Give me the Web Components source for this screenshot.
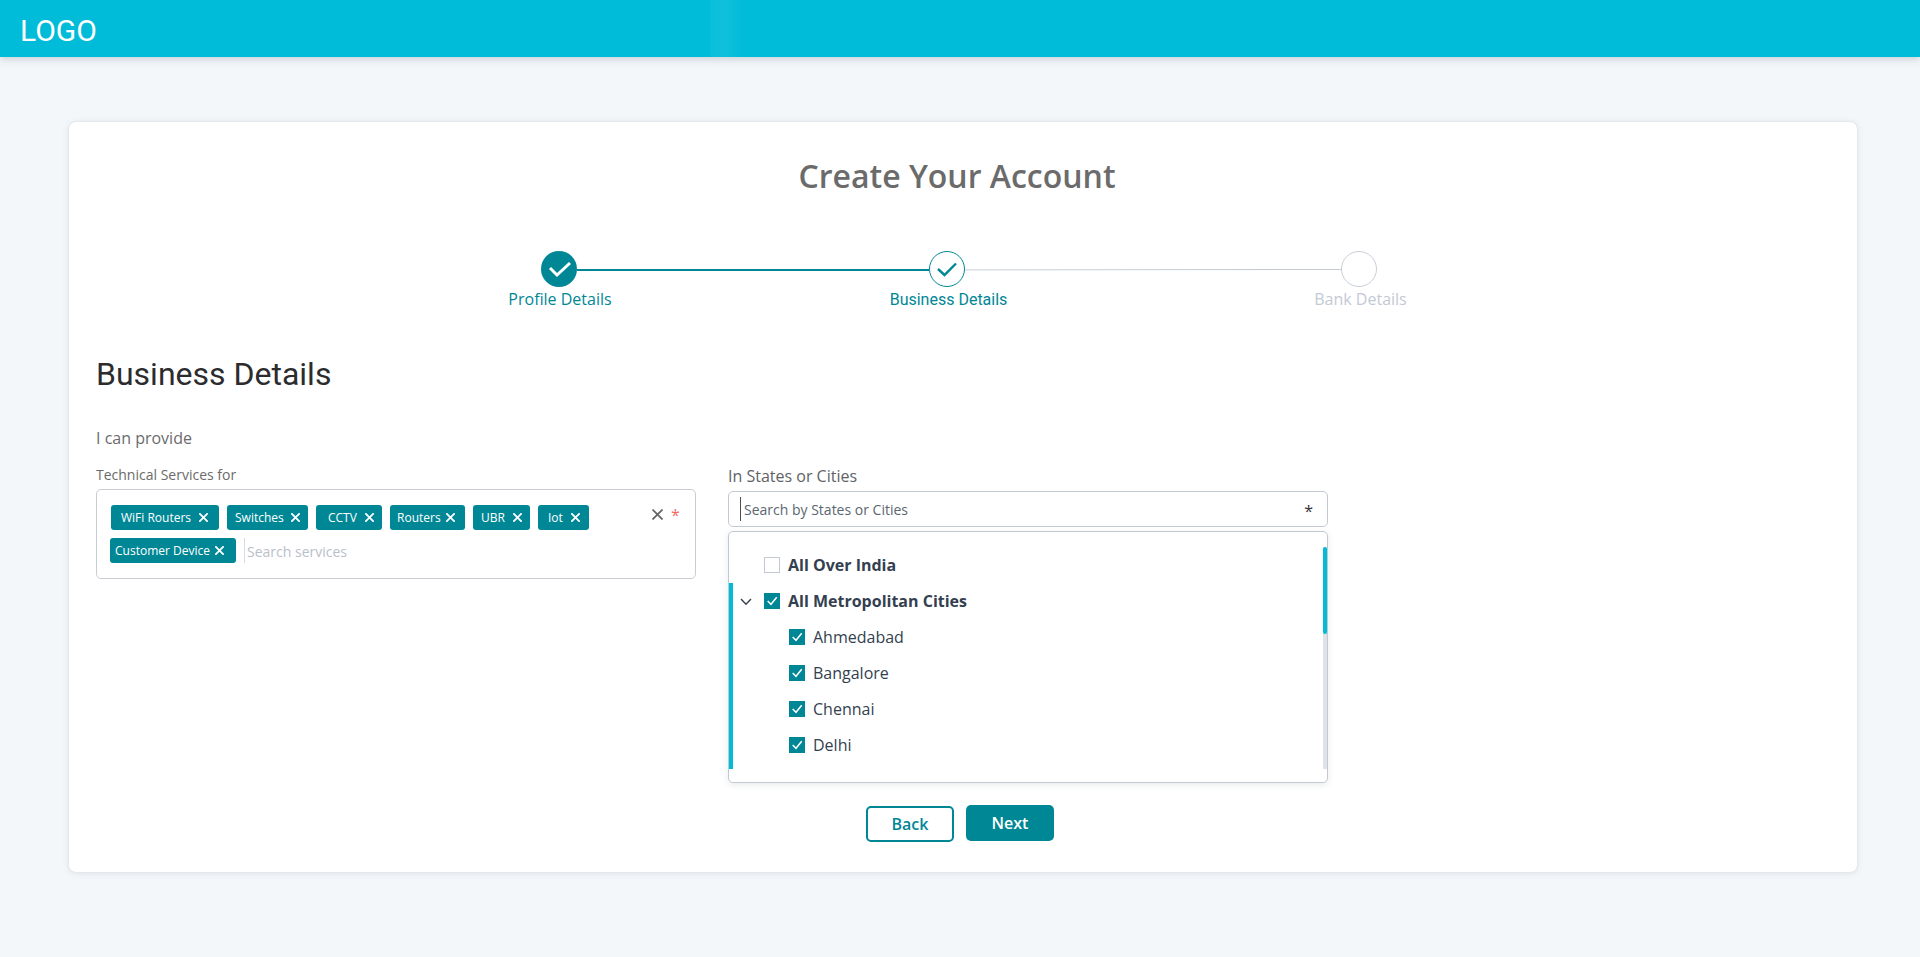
<!DOCTYPE html>
<html lang="en"><head><meta charset="utf-8"><title>Create Your Account</title>
<style>
html,body{margin:0;padding:0;background:#f4f7fa;height:957px;overflow:hidden;font-family:"Open Sans",sans-serif}
</style></head><body>
<app-header>LOGO</app-header>
<account-card>
  <card-title slot="title">Create Your Account</card-title>
  <step-progress></step-progress>
  <section-heading>Business Details</section-heading>
  <form-intro>I can provide</form-intro>
  <form-columns>
    <tag-input label="Technical Services for" placeholder="Search services">
      <tag-chip w="108" pad="10" rm="11">WiFi Routers</tag-chip>
      <tag-chip w="81" pad="8" rm="8">Switches</tag-chip>
      <tag-chip w="66" pad="12" rm="8">CCTV</tag-chip>
      <tag-chip w="75" pad="7" rm="10">Routers</tag-chip>
      <tag-chip w="57" pad="8" rm="8">UBR</tag-chip>
      <tag-chip w="51" pad="10" rm="9">Iot</tag-chip>
      <tag-chip w="126" pad="5" rm="12" style="margin-left:-1px">Customer Device</tag-chip>
    </tag-input>
    <city-select label="In States or Cities" placeholder="Search by States or Cities">
      <tree-row bold>All Over India</tree-row>
      <tree-row bold checked chevron>All Metropolitan Cities</tree-row>
      <tree-row checked child>Ahmedabad</tree-row>
      <tree-row checked child>Bangalore</tree-row>
      <tree-row checked child>Chennai</tree-row>
      <tree-row checked child>Delhi</tree-row>
    </city-select>
  </form-columns>
  <button-row>
    <app-button variant="outline" style="margin-top:1px">Back</app-button>
    <app-button>Next</app-button>
  </button-row>
</account-card>
<script>
const def=(name,html,init)=>customElements.define(name,class extends HTMLElement{
  constructor(){super();this.attachShadow({mode:'open'}).innerHTML=typeof html==='function'?html(this):html;}
  connectedCallback(){init&&init(this);}
});
const X=(s,w,c)=>`<svg width="${s}" height="${s}" viewBox="0 0 10 10" style="display:block;flex:none"><path d="M1 1L9 9M9 1L1 9" stroke="${c}" stroke-width="${w}" stroke-linecap="square" fill="none"/></svg>`;
const TEAL='#008796';

def('app-header',`<style>:host{display:flex;align-items:center;position:relative;box-sizing:border-box;height:57px;padding:4px 0 0 20px;background:#00bcd8;color:#fff;font:400 30px Roboto,sans-serif;box-shadow:0 2px 8px rgba(40,60,80,.22);z-index:2}
.sheen{position:absolute;left:710px;top:0;width:30px;height:57px;background:linear-gradient(90deg,rgba(255,255,255,.04),rgba(255,255,255,.06) 50%,rgba(255,255,255,.015))}</style><slot></slot><div class="sheen"></div>`);

def('account-card',`<style>:host{display:block;box-sizing:border-box;width:1790px;height:752px;margin:64px 0 0 68px;padding:32px 27px 0;background:#fff;border:1px solid #e4e7eb;border-radius:8px;box-shadow:0 1px 6px rgba(60,80,100,.1)}</style><slot name="title"></slot><slot></slot>`);

def('card-title',`<style>:host{display:block;height:44px;line-height:44px;text-align:center;padding-right:12px;font:600 32px/44px "Open Sans",sans-serif;color:#6b6b6b}</style><slot></slot>`);

def('step-progress',`<style>
:host{display:grid;grid-template-columns:36px 352px 36px 376px 36px;grid-template-rows:36px 22px;row-gap:1px;margin:53px 0 0 445px;align-items:center;font:400 16px/22px "Open Sans",sans-serif}
.c{box-sizing:border-box;width:36px;height:36px;border-radius:50%;position:relative}
.c svg{position:absolute;left:0;top:0}
.cur svg{left:-1px;top:-1px}
.done{background:${TEAL}}.cur{border:1px solid ${TEAL};background:#fff}.todo{border:1px solid #c8ced8;background:#fff}
.l1{height:2px;background:${TEAL};margin-top:2px}
.l2{height:2px;margin-top:2px;background:linear-gradient(90deg,#dfe2e8,#c5cbd5 80%) top/100% 1px no-repeat,linear-gradient(90deg,#e8ebef,#fff 85%) bottom/100% 1px no-repeat}
.lab{grid-row:2;justify-self:center;white-space:nowrap;color:${TEAL}}.off{color:#c3cad4}
.rb{font-family:Roboto,sans-serif;padding-top:2px}
</style>
<div class="c done"><svg width="36" height="36" viewBox="0 0 36 36"><path d="M9 17L16 24L29 12" stroke="#fff" stroke-width="3" fill="none"/></svg></div>
<div class="l1"></div>
<div class="c cur"><svg width="36" height="36" viewBox="0 0 36 36"><path d="M9 18L15.5 24L27 12.5" stroke="${TEAL}" stroke-width="2.4" fill="none"/></svg></div>
<div class="l2"></div>
<div class="c todo"></div>
<div class="lab" style="grid-column:1;margin-left:2px">Profile Details</div>
<div class="lab rb" style="grid-column:3;margin-left:3px">Business Details</div>
<div class="lab off" style="grid-column:5;margin-left:3px">Bank Details</div>`);

def('section-heading',`<style>:host{display:block;margin-top:44px;font:400 32px/40px Roboto,sans-serif;color:#2c2c2e}</style><slot></slot>`);
def('form-intro',`<style>:host{display:block;margin-top:33px;font:400 16px/22px "Open Sans",sans-serif;color:#6b6b6b}</style><slot></slot>`);
def('form-columns',`<style>:host{display:grid;grid-template-columns:600px 600px;column-gap:32px;margin-top:15px;align-items:start}</style><slot></slot>`);

def('tag-input',h=>`<style>
:host{display:block}
.lab{font:400 14px/20px "Open Sans",sans-serif;color:#6b6b6b;height:20px;margin-bottom:5px;padding-top:1px;box-sizing:border-box}
.box{box-sizing:border-box;position:relative;height:90px;border:1px solid #c9cdd3;border-radius:5px;padding:15px 80px 0 14px}
.wrap{display:flex;flex-wrap:wrap;gap:8px 8px;align-items:center}
.ph{display:flex;align-items:center;height:25px;padding:2px 0 0 2px;box-sizing:border-box;border-left:1px solid #d7dbe0;font:400 14px "Open Sans",sans-serif;color:#b9c0ca}
.act{position:absolute;left:555px;top:17px;display:flex;align-items:center;gap:8px}
.star{font:400 16px/16px "Open Sans",sans-serif;color:#f4695f;height:14px}
</style>
<div class="lab">${h.getAttribute('label')}</div>
<div class="box"><div class="wrap"><slot></slot><div class="ph">${h.getAttribute('placeholder')}</div></div>
<div class="act">${X(11,1.6,'#666')}<span class="star">*</span></div></div>`);

def('tag-chip',h=>`<style>
:host{display:inline-flex;box-sizing:border-box;height:25px;width:${h.getAttribute('w')}px;align-items:center;justify-content:space-between;padding:0 ${h.getAttribute('rm')}px 0 ${h.getAttribute('pad')}px;background:${TEAL};border-radius:3px;color:#fff;font:400 12px "Open Sans",sans-serif;white-space:nowrap}
</style><span><slot></slot></span>${X(9,2,'#fff')}`);

def('city-select',h=>`<style>
:host{display:block;margin-top:1px}
.lab{font:400 16px/22px "Open Sans",sans-serif;color:#5f6368;height:22px;margin-bottom:4px}
.inp{box-sizing:border-box;height:36px;border:1px solid #c3c9d2;border-radius:5px;display:flex;align-items:center;padding:0 14px 0 11px;font:400 14px "Open Sans",sans-serif;color:#5c6670}
.caret{width:1px;height:24px;background:#4a5058;margin-right:3px}
.sp{flex:1}.ast{font:400 16px/16px "Open Sans",sans-serif;color:#333;height:12px}
.pop{box-sizing:border-box;position:relative;height:252px;margin-top:4px;padding:15px 0 0;border:1px solid #c3c9d2;border-radius:5px;background:#fff;box-shadow:0 2px 6px rgba(60,80,100,.12)}
.list{height:222px;overflow:hidden}
.left{position:absolute;left:0;top:51px;width:4px;height:186px;background:#00bcd8}
.track{position:absolute;right:0;top:15px;width:4px;height:222px;background:#dfe2e8;border-radius:2px 2px 0 0}
.thumb{width:4px;height:87px;background:#00bcd8;border-radius:2px}
</style>
<div class="lab">${h.getAttribute('label')}</div>
<div class="inp"><span class="caret"></span><span>${h.getAttribute('placeholder')}</span><span class="sp"></span><span class="ast">*</span></div>
<div class="pop"><div class="list"><slot></slot></div><div class="left"></div><div class="track"><div class="thumb"></div></div></div>`);

def('tree-row',h=>{
 const b=h.hasAttribute('bold'),c=h.hasAttribute('checked'),ch=h.hasAttribute('child'),v=h.hasAttribute('chevron');
 return `<style>
:host{display:flex;align-items:center;height:36px;padding-left:${ch?60:35}px;font:${b?700:400} 16px "Open Sans",sans-serif;color:#343f50;position:relative}
.box{box-sizing:border-box;width:16px;height:16px;margin-right:8px;flex:none;position:relative;${c?`background:${TEAL}`:'border:1px solid #c3c9d2;background:#fff'}}
.box svg{position:absolute;left:0;top:0}
.chev{position:absolute;left:11px;top:15px}
</style>${v?`<svg class="chev" width="12" height="8" viewBox="0 0 12 8"><path d="M1 1L6 6.2L11 1" stroke="#343f50" stroke-width="1.4" fill="none"/></svg>`:''}
<span class="box">${c?`<svg width="16" height="16" viewBox="0 0 16 16"><path d="M3.7 8L7 11.3L12.7 4.2" stroke="#fff" stroke-width="1.5" fill="none"/></svg>`:''}</span><slot></slot>`;
});

def('button-row',`<style>:host{display:flex;align-items:flex-start;gap:12px;margin:22px 0 0 770px}</style><slot></slot>`);
def('app-button',h=>{const o=h.getAttribute('variant')==='outline';return `<style>
:host{box-sizing:border-box;display:flex;align-items:center;justify-content:center;width:88px;height:36px;border-radius:5px;font:600 16px "Open Sans",sans-serif;${o?`border:2px solid ${TEAL};color:${TEAL};background:#fff`:`background:${TEAL};color:#fff`}}
</style><slot></slot>`});
</script>
</body></html>
